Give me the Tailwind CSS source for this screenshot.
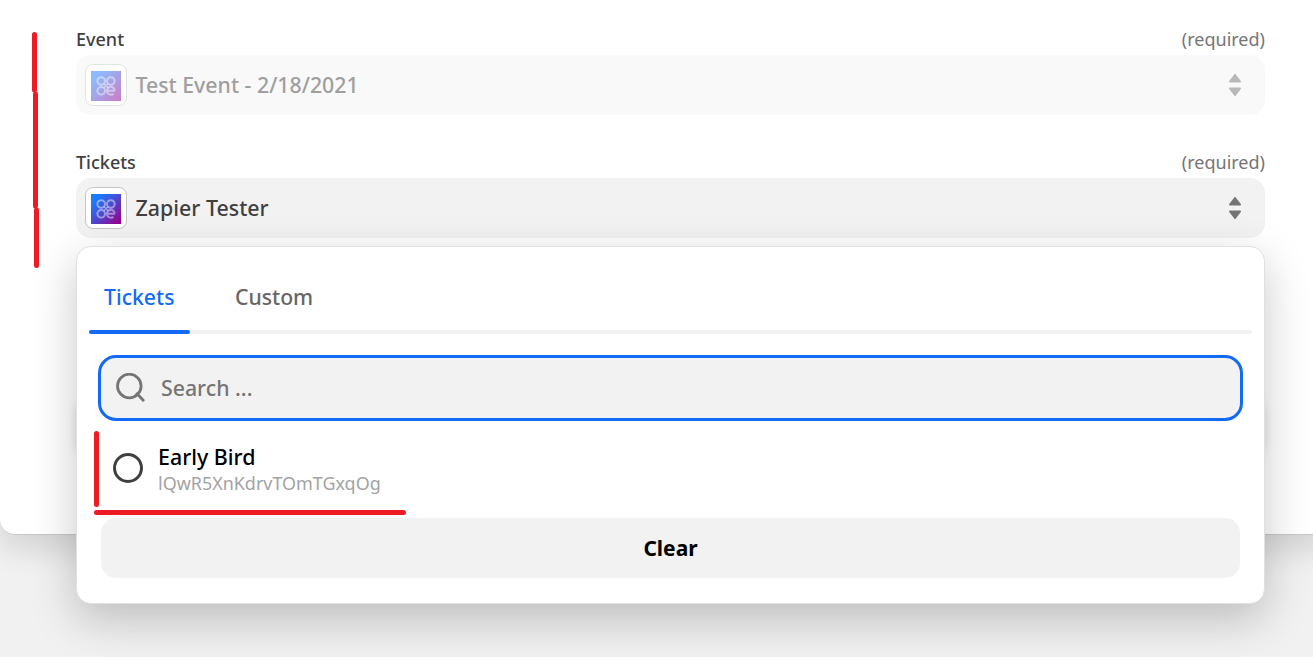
<!DOCTYPE html>
<html lang="en">
  <head>
    <meta charset="UTF-8" />
    <title>Tickets</title>
    <script src="https://cdn.jsdelivr.net/npm/@tailwindcss/browser@4"></script>
  </head>
  <body class="bg-white font-['Noto_Sans','Open_Sans',sans-serif] text-[#403f3e]">
    <!-- App icon and sort arrows, shared by both fields -->
    <svg class="absolute size-0">
      <defs>
        <linearGradient id="icon-bg" x1="0" y1="0" x2="1" y2="1">
          <stop offset="0.15" stop-color="#1a7cff" />
          <stop offset="0.5" stop-color="#4a4bd0" />
          <stop offset="0.95" stop-color="#99008f" />
        </linearGradient>
        <symbol id="app-icon" viewBox="0 0 30 30">
          <rect width="30" height="30" fill="url(#icon-bg)" />
          <g fill="none" stroke="#fff" stroke-opacity="0.45" stroke-width="2">
            <circle cx="10.2" cy="10" r="3.8" />
            <circle cx="19.8" cy="10" r="3.8" />
            <circle cx="10.2" cy="19.8" r="3.8" />
            <path d="M16 19.8h8M23.7 19.4a3.9 3.9 0 1 0-1.3 3.3" />
            <path d="M13 12.8l4 4M17 12.8l-4 4" stroke-width="1.4" />
          </g>
        </symbol>
        <symbol id="sort-icon" viewBox="0 0 12 22">
          <path d="M6 1L11 7.5H1ZM6 21L11 14.5H1Z" fill="currentColor" stroke="currentColor" stroke-width="2" stroke-linejoin="round" />
        </symbol>
      </defs>
    </svg>

    <div class="relative h-[657px] overflow-hidden bg-[#f1f1f1]">
      <!-- Form card -->
      <div
        class="-mr-5 h-[535px] rounded-bl-[15px] border-b border-[#c6c6c6] bg-white pt-7 pl-19 pr-17 shadow-[0_15px_30px_rgba(0,0,0,0.12)]"
      >
        <!-- Event -->
        <div class="flex h-[27px] justify-between text-[18px] leading-[22px]">
          <label class="font-medium">Event</label>
          <span class="text-[#757575]">(required)</span>
        </div>
        <div class="flex h-[60px] items-center rounded-[15px] bg-[#f9f9f9] pl-[9px] pr-6">
          <div class="flex size-[42px] justify-center rounded-lg border border-[#e3e3e3] bg-white pt-1.5">
            <svg class="size-[30px] opacity-50"><use href="#app-icon" /></svg>
          </div>
          <span class="ml-[8.5px] grow text-[21.3px] leading-8 font-medium text-[#9f9f9e]">Test Event - 2/18/2021</span>
          <svg class="h-[22px] w-3 text-[#b8b8b8]"><use href="#sort-icon" /></svg>
        </div>

        <!-- Tickets -->
        <div class="mt-9 flex h-[27px] justify-between text-[18px] leading-[22px]">
          <label class="font-medium">Tickets</label>
          <span class="text-[#757575]">(required)</span>
        </div>
        <div class="flex h-[60px] items-center rounded-[15px] bg-[#f2f2f2] pl-[9px] pr-6">
          <div class="flex size-[42px] justify-center rounded-lg border border-[#c6c6c6] bg-white pt-1.5">
            <svg class="size-[30px]"><use href="#app-icon" /></svg>
          </div>
          <span class="ml-[8.5px] grow text-[21.4px] leading-8 font-medium">Zapier Tester</span>
          <svg class="h-[22px] w-3 text-[#757575]"><use href="#sort-icon" /></svg>
        </div>

        <!-- Submit button, mostly behind the menu -->
        <div class="mt-[157px] h-[60px] rounded-[15px] shadow-[0_3px_10px_rgba(0,0,0,0.12)]"></div>
      </div>

      <!-- Dropdown menu -->
      <div
        class="absolute left-[76px] top-[246px] h-[358px] w-[1189px] rounded-[15px] border border-[#e0e0e0] bg-white px-3 pt-6 shadow-[0_15px_45px_rgba(0,0,0,0.22)]"
      >
        <div class="relative flex h-[63px] gap-[30px] text-[21.2px] font-medium">
          <div class="absolute inset-x-0 bottom-0 h-1 rounded-full bg-[#f1f1f1]"></div>
          <div class="relative h-[63px] w-[101px] pl-[15px] pt-[10px] leading-8 text-[#136bf5]">
            Tickets
            <div class="absolute inset-x-0 bottom-0 h-1 rounded-full bg-[#136bf5]"></div>
          </div>
          <div class="pl-[15px] pt-[10px] leading-8 text-[#666]">Custom</div>
        </div>

        <div class="mx-[9px] mt-[21px] flex h-[66px] items-center rounded-[18px] border-3 border-[#136bf5] bg-[#f2f2f2] pl-[14px] text-[#757575]">
          <svg class="size-[30px]" viewBox="0 0 30 30" fill="none" stroke="currentColor" stroke-width="2.8">
            <circle cx="14.3" cy="13" r="11.8" />
            <path d="M22 20.8L28.2 27.2" stroke-linecap="round" />
          </svg>
          <span class="ml-4 text-[21.3px] leading-8 font-medium">Search ...</span>
        </div>

        <div class="mx-3 flex h-[97px] pl-3">
          <div class="mt-8 size-[30px] rounded-full border-3 border-[#403f3e]"></div>
          <div class="ml-[15px] mt-[23px]">
            <div class="text-[21.4px] font-medium leading-[26px] text-black">Early Bird</div>
            <div class="text-[17.95px] leading-[26px] text-[#a3a3a3]">lQwR5XnKdrvTOmTGxqOg</div>
          </div>
        </div>

        <div class="mx-3 grid h-[60px] place-items-center rounded-[15px] bg-[#f2f2f2] pt-0.5 text-[21px] font-bold text-black">Clear</div>
      </div>

      <!-- Red marker strokes -->
      <svg class="absolute inset-0 h-full w-full" fill="none" stroke="#ed1c24" stroke-width="5" stroke-linecap="round">
        <path d="M34.5 34.5V90M35.5 94V206M36.5 210V265.5" />
        <path d="M96.5 433.5V504.5M96.5 512.5H403.5" />
      </svg>
    </div>
  </body>
</html>
